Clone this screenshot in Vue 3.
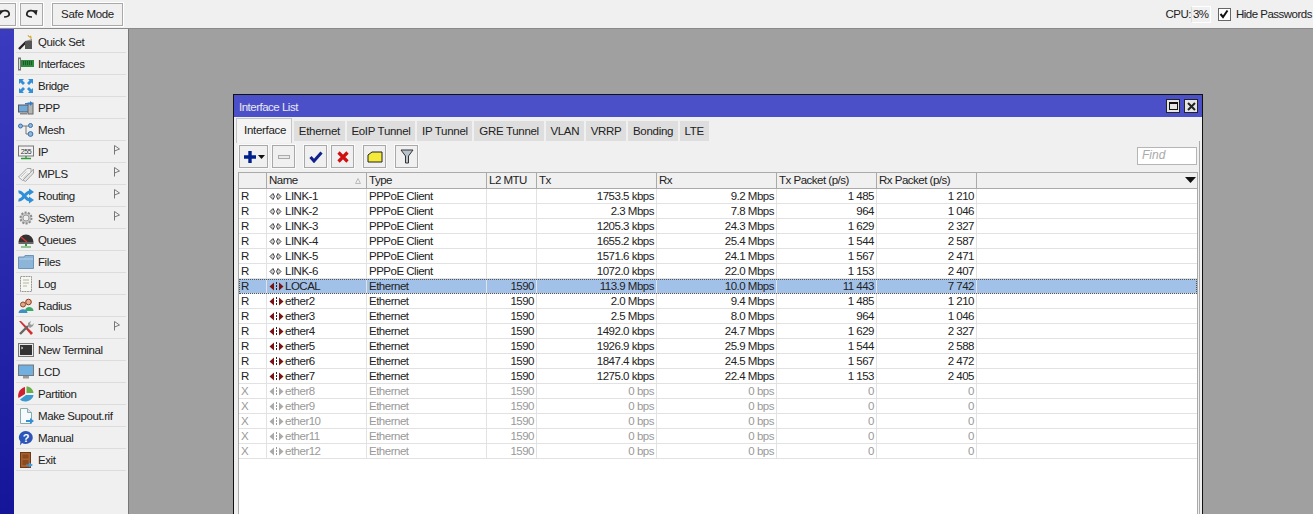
<template>
  <div class="page">
    <header class="topbar">
      <div class="tools-left">
        <button class="tbtn undo">
          <svg width="13" height="10" viewBox="0 0 13 10"><path d="M3 3 C5 1 10 1 11 4 C12 7 9 8 6 8" fill="none" stroke="#222" stroke-width="1.7"/><path d="M0.5 1 L6 1.5 L1.5 6.5 Z" fill="#222"/></svg>
        </button>
        <button class="tbtn redo">
          <svg width="13" height="10" viewBox="0 0 13 10"><path d="M10 3 C8 1 3 1 2 4 C1 7 4 8 7 8" fill="none" stroke="#222" stroke-width="1.7"/><path d="M12.5 1 L7 1.5 L11.5 6.5 Z" fill="#222"/></svg>
        </button>
        <button class="tbtn safe">Safe Mode</button>
      </div>
      <div class="tools-right">
        <span>CPU:</span><span class="cpu">3%</span>
        <span class="check">
          <svg width="10" height="10" viewBox="0 0 10 10"><path d="M1.5 5 L4 8 L8.5 1.5" fill="none" stroke="#111" stroke-width="2"/></svg>
        </span>
        <span>Hide Passwords</span>
      </div>
    </header>

    <div class="main">
      <div class="strip"></div>
      <nav class="menu">
        <div v-for="item in menu" :key="item.label" class="menu-item">
          <svg class="menu-icon" width="16" height="16" viewBox="0 0 16 16" v-html="icons[item.icon]"></svg>
          <span>{{ item.label }}</span>
          <svg v-if="item.sub" class="menu-arrow" width="6" height="10" viewBox="0 0 6 10"><path d="M0.5 0.5 L5.5 4 L0.5 6 Z M0.5 6 V9.5" fill="#f4f4f4" stroke="#777"/></svg>
        </div>
      </nav>

      <div class="desktop">
        <section class="window">
          <div class="titlebar">
            <span class="title">Interface List</span>
            <div class="win-btns">
              <span class="win-btn"><i class="max"></i></span>
              <span class="win-btn">
                <svg width="9" height="9" viewBox="0 0 9 9"><path d="M1 1 L8 8 M8 1 L1 8" stroke="#222" stroke-width="2"/></svg>
              </span>
            </div>
          </div>

          <div class="tabs">
            <span v-for="(t, i) in tabs" :key="t" class="tab" :class="{ active: i === 0 }">{{ t }}</span>
          </div>

          <div class="panel">
            <div class="actions">
              <button class="abtn add">
                <svg width="14" height="14" viewBox="0 0 14 14"><path d="M7 1 V13 M1 7 H13" stroke="#00208c" stroke-width="3.4"/></svg>
                <svg width="7" height="4" viewBox="0 0 7 4"><path d="M0 0 H7 L3.5 4 Z" fill="#111"/></svg>
              </button>
              <button class="abtn dim">
                <svg width="12" height="6" viewBox="0 0 12 6"><rect x="0.5" y="1.5" width="11" height="3" fill="#e8e8e8" stroke="#aaa"/></svg>
              </button>
              <button class="abtn gap">
                <svg width="14" height="12" viewBox="0 0 14 12"><path d="M1.5 6 L5 10 L12.5 1.5" fill="none" stroke="#11218c" stroke-width="3"/></svg>
              </button>
              <button class="abtn">
                <svg width="12" height="12" viewBox="0 0 12 12"><path d="M1.5 1.5 L10.5 10.5 M10.5 1.5 L1.5 10.5" stroke="#d01010" stroke-width="3.2"/></svg>
              </button>
              <button class="abtn gap">
                <svg width="16" height="12" viewBox="0 0 16 12"><path d="M1 4 L5 1 H15 V11 H1 Z" fill="#f5e93a" stroke="#222"/></svg>
              </button>
              <button class="abtn gap">
                <svg width="14" height="15" viewBox="0 0 14 15"><path d="M1 1 H13 L8.5 7 V14 H5.5 V7 Z" fill="#b9c3cc" stroke="#333"/></svg>
              </button>
              <div class="find">Find</div>
            </div>

            <div class="table">
              <div class="thead">
                <div v-for="(c, i) in heads" :key="i" class="th">
                  {{ c }}
                  <svg v-if="i === 1" class="sort" width="6" height="6" viewBox="0 0 6 6"><path d="M3 0.5 L5.5 5.5 H0.5 Z" fill="none" stroke="#bbb"/></svg>
                  <svg v-if="i === 8" class="drop" width="11" height="6" viewBox="0 0 11 6"><path d="M0 0 H11 L5.5 6 Z" fill="#111"/></svg>
                </div>
              </div>
              <div v-for="row in rows" :key="row.name" class="tr" :class="{ sel: row.name === 'LOCAL', off: row.flag === 'X' }">
                <div class="td">{{ row.flag }}</div>
                <div class="td name">
                  <svg class="port" width="15" height="9" viewBox="0 0 15 9">
                    <template v-if="row.type === 'Ethernet'">
                      <path d="M0.5 4.5 L5 0.5 V8.5 Z M14.5 4.5 L10 0.5 V8.5 Z" :fill="row.flag === 'X' ? '#aaa' : '#7a1414'"/>
                      <path d="M7.5 0 V9" :stroke="row.flag === 'X' ? '#999' : '#222'" stroke-dasharray="2 1"/>
                    </template>
                    <template v-else>
                      <path d="M1 4.5 L4 1.5 L5.5 4.5 L4 7.5 Z M12 4.5 L9 1.5 L7.5 4.5 L9 7.5 Z" fill="#ccc" stroke="#444"/>
                    </template>
                  </svg>{{ row.name }}
                </div>
                <div class="td">{{ row.type }}</div>
                <div class="td num">{{ row.mtu }}</div>
                <div class="td num">{{ row.tx }}</div>
                <div class="td num">{{ row.rx }}</div>
                <div class="td num">{{ row.txp }}</div>
                <div class="td num">{{ row.rxp }}</div>
                <div class="td last"></div>
              </div>
            </div>
          </div>
        </section>
      </div>
    </div>
  </div>
</template>

<script setup>
const menu = [
  { label: 'Quick Set', icon: 'quick' },
  { label: 'Interfaces', icon: 'iface' },
  { label: 'Bridge', icon: 'bridge' },
  { label: 'PPP', icon: 'ppp' },
  { label: 'Mesh', icon: 'mesh' },
  { label: 'IP', icon: 'ip', sub: true },
  { label: 'MPLS', icon: 'mpls', sub: true },
  { label: 'Routing', icon: 'routing', sub: true },
  { label: 'System', icon: 'system', sub: true },
  { label: 'Queues', icon: 'queues' },
  { label: 'Files', icon: 'files' },
  { label: 'Log', icon: 'log' },
  { label: 'Radius', icon: 'radius' },
  { label: 'Tools', icon: 'tools', sub: true },
  { label: 'New Terminal', icon: 'terminal' },
  { label: 'LCD', icon: 'lcd' },
  { label: 'Partition', icon: 'partition' },
  { label: 'Make Supout.rif', icon: 'supout' },
  { label: 'Manual', icon: 'manual' },
  { label: 'Exit', icon: 'exit' },
]

const icons = {
  quick: '<path d="M1 15 L8 8" stroke="#222" stroke-width="2.4"/><rect x="7" y="7" width="7" height="8" fill="#555"/><path d="M7 7 L14 5 V7 Z" fill="#888"/><path d="M10 1 L11 3 L13 2 L12 4 L14 4" stroke="#d9a520" fill="none"/>',
  iface: '<rect x="0.5" y="2" width="2" height="12" fill="#ddd" stroke="#777"/><rect x="3" y="4" width="13" height="7" fill="#2f8a3a"/><path d="M5 6 H14 M5 8 H14" stroke="#123" stroke-dasharray="1 1"/>',
  bridge: '<path d="M1 1 H6 L4.5 2.5 L7 5 L5 7 L2.5 4.5 L1 6 Z M15 1 V6 L13.5 4.5 L11 7 L9 5 L11.5 2.5 L10 1 Z M1 15 V10 L2.5 11.5 L5 9 L7 11 L4.5 13.5 L6 15 Z M15 15 H10 L11.5 13.5 L9 11 L11 9 L13.5 11.5 L15 10 Z" fill="#2f8fd8"/>',
  ppp: '<rect x="0.5" y="5" width="11" height="7" fill="#6fa9d8" stroke="#556"/><rect x="10" y="3" width="5" height="11" fill="#b5b5b5" stroke="#666"/><path d="M7 3 H12 V1 L15 3.5 L12 6 V4.5 H7 Z" fill="#2f7fd0"/><rect x="2" y="13" width="7" height="1.5" fill="#888"/>',
  mesh: '<circle cx="2.5" cy="4" r="2" fill="#8db9e0" stroke="#3a6fa5"/><circle cx="12.5" cy="3.5" r="2" fill="#8db9e0" stroke="#3a6fa5"/><circle cx="12.5" cy="12" r="2.4" fill="#8db9e0" stroke="#3a6fa5"/><path d="M4.5 4 H10.5 M8 4 V12 H10" stroke="#777" fill="none"/>',
  ip: '<rect x="0.5" y="2" width="15" height="10" fill="#f2f2f2" stroke="#777"/><text x="8" y="9.5" font-size="7" font-family="Liberation Sans" text-anchor="middle" fill="#333">255</text><path d="M8 12 V14 M3 14.5 H13" stroke="#2f9a3a" stroke-width="1.4"/>',
  mpls: '<path d="M0.5 11 L9 2.5 H13 V6 L4.5 14.5 Z" fill="#f2f2f2" stroke="#a5a5a5"/><path d="M5 14 L13 6 L15.5 3 V7 L7.5 15.5 Z" fill="#e4e4e4" stroke="#a5a5a5"/><path d="M3 11 L8.5 5.5 M5 12.5 L10.5 7" stroke="#c4c4c4"/>',
  routing: '<path d="M0.5 4 C5 3 7 12 12 12" fill="none" stroke="#2f8fd8" stroke-width="3"/><path d="M0.5 12 C5 13 7 4 12 4" fill="none" stroke="#2f8fd8" stroke-width="3"/><path d="M11 0.5 L16 4 L11 7.5 Z M11 8.5 L16 12 L11 15.5 Z" fill="#2f8fd8"/>',
  system: '<circle cx="8" cy="8" r="5.5" fill="#c9c9c9" stroke="#8a8a8a" stroke-width="2" stroke-dasharray="2 1.4"/><circle cx="8" cy="8" r="3" fill="#eee" stroke="#999"/>',
  queues: '<path d="M0.5 10 A7.5 7.5 0 0 1 15.5 10 Z" fill="#333"/><path d="M3 5 L9 10" stroke="#e03030" stroke-width="1.4"/><rect x="0.5" y="10" width="15" height="2" fill="#666"/><path d="M8 12 V14" stroke="#2f9a3a" stroke-width="2"/><path d="M3 15 H13" stroke="#2f9a3a"/>',
  files: '<path d="M0.5 3 H6 L7 1.5 H15.5 V14.5 H0.5 Z" fill="#8db5d8" stroke="#6a94b8"/><path d="M1 5 H15" stroke="#b8d2e8"/>',
  log: '<path d="M2.5 0.5 H13.5 V15.5 H2.5 Z" fill="#f7f7f2" stroke="#999" stroke-dasharray="2 .6"/><path d="M5 4 H11 M5 7 H11 M5 10 H9" stroke="#b5b5a5"/>',
  radius: '<circle cx="5" cy="6.5" r="2.5" fill="#e0a888" stroke="#8a4a2a"/><path d="M0.5 15 C0.5 10 9.5 10 9.5 15 Z" fill="#3f8fc8"/><circle cx="10.5" cy="4" r="2.8" fill="#e8b090" stroke="#8a3a1a"/><path d="M7 13 C7 7.5 15.5 7.5 15.5 13 Z" fill="#3aaa6a"/>',
  tools: '<path d="M1 1 L3 1 L15 13 L13 15 Z" fill="#d03030"/><path d="M2 14 L10 6" stroke="#666" stroke-width="2.4"/><path d="M10 6 L10 3 L13 1 L12 4 L14 5 L16 3 L15 6 L12 8 Z" fill="#999"/>',
  terminal: '<rect x="0.5" y="1.5" width="15" height="13" fill="#e8e8e8" stroke="#777"/><rect x="2" y="3" width="12" height="10" fill="#333"/><path d="M3 5 L5 6 L3 7" stroke="#ddd" fill="none" stroke-width=".8"/>',
  lcd: '<rect x="0.5" y="1" width="15" height="10.5" fill="#6fb0e0" stroke="#777"/><rect x="5" y="12" width="6" height="2.5" fill="#999"/>',
  partition: '<path d="M7 1 V8 L0.5 12 C-1 8 2 2 7 1 Z" fill="#d02030"/><path d="M8.5 0.5 C12 0.5 15 3 15.5 7 H8.5 Z" fill="#6ab04a"/><path d="M2 13.5 L8 9 H15.5 C15 13 11 15.5 7 15.5 C5 15.5 3 14.5 2 13.5 Z" fill="#3a9ad0"/>',
  supout: '<path d="M2.5 0.5 H9.5 L13.5 4.5 V15.5 H2.5 Z" fill="#f6fafd" stroke="#8aa"/><path d="M9.5 0.5 V4.5 H13.5" fill="#dde" stroke="#8aa"/><path d="M8 12 H12 V10 L16 13 L12 16 V14 H8 Z" fill="#2f8fd8"/>',
  manual: '<path d="M8 1 A7 6.5 0 1 1 4 13 L2 15.5 L2.4 11.5 A7 6.5 0 0 1 8 1 Z" fill="#2b55b8"/><text x="8" y="12" font-size="11" font-weight="700" font-family="Liberation Sans" text-anchor="middle" fill="#fff">?</text>',
  exit: '<rect x="2.5" y="0.5" width="10" height="15" fill="#a8602c" stroke="#6a3a18"/><rect x="4.5" y="2.5" width="6" height="4" fill="#8a4a20"/><rect x="4.5" y="8" width="6" height="5" fill="#8a4a20"/><path d="M8 12.5 H11 V10.5 L15 13 L11 15.5 V13.5 H8 Z" fill="#3f9ae0"/>',
}

const tabs = ['Interface', 'Ethernet', 'EoIP Tunnel', 'IP Tunnel', 'GRE Tunnel', 'VLAN', 'VRRP', 'Bonding', 'LTE']

const heads = ['', 'Name', 'Type', 'L2 MTU', 'Tx', 'Rx', 'Tx Packet (p/s)', 'Rx Packet (p/s)', '']

const pp = 'PPPoE Client'
const et = 'Ethernet'
const rows = [
  ['R', 'LINK-1', pp, '', '1753.5 kbps', '9.2 Mbps', '1 485', '1 210'],
  ['R', 'LINK-2', pp, '', '2.3 Mbps', '7.8 Mbps', '964', '1 046'],
  ['R', 'LINK-3', pp, '', '1205.3 kbps', '24.3 Mbps', '1 629', '2 327'],
  ['R', 'LINK-4', pp, '', '1655.2 kbps', '25.4 Mbps', '1 544', '2 587'],
  ['R', 'LINK-5', pp, '', '1571.6 kbps', '24.1 Mbps', '1 567', '2 471'],
  ['R', 'LINK-6', pp, '', '1072.0 kbps', '22.0 Mbps', '1 153', '2 407'],
  ['R', 'LOCAL', et, '1590', '113.9 Mbps', '10.0 Mbps', '11 443', '7 742'],
  ['R', 'ether2', et, '1590', '2.0 Mbps', '9.4 Mbps', '1 485', '1 210'],
  ['R', 'ether3', et, '1590', '2.5 Mbps', '8.0 Mbps', '964', '1 046'],
  ['R', 'ether4', et, '1590', '1492.0 kbps', '24.7 Mbps', '1 629', '2 327'],
  ['R', 'ether5', et, '1590', '1926.9 kbps', '25.9 Mbps', '1 544', '2 588'],
  ['R', 'ether6', et, '1590', '1847.4 kbps', '24.5 Mbps', '1 567', '2 472'],
  ['R', 'ether7', et, '1590', '1275.0 kbps', '22.4 Mbps', '1 153', '2 405'],
  ['X', 'ether8', et, '1590', '0 bps', '0 bps', '0', '0'],
  ['X', 'ether9', et, '1590', '0 bps', '0 bps', '0', '0'],
  ['X', 'ether10', et, '1590', '0 bps', '0 bps', '0', '0'],
  ['X', 'ether11', et, '1590', '0 bps', '0 bps', '0', '0'],
  ['X', 'ether12', et, '1590', '0 bps', '0 bps', '0', '0'],
].map(([flag, name, type, mtu, tx, rx, txp, rxp]) => ({ flag, name, type, mtu, tx, rx, txp, rxp }))
</script>

<style>
html, body {
  margin: 0;
  overflow: hidden;
}
</style>

<style scoped>
.page {
  width: 1313px;
  height: 514px;
  display: flex;
  flex-direction: column;
  overflow: hidden;
  background: #f0f0f0;
  font-family: "Liberation Sans", Arial, sans-serif;
  font-size: 11.5px;
  letter-spacing: -0.5px;
  color: #222;
}
.topbar {
  height: 29px;
  flex: none;
  box-sizing: border-box;
  display: flex;
  justify-content: space-between;
  align-items: center;
  background: #f0f0f0;
  border-bottom: 1px solid #8a8a8a;
}
.tools-left {
  display: flex;
  align-items: center;
  margin-left: -7px;
}
.tbtn {
  box-sizing: border-box;
  height: 23px;
  display: flex;
  align-items: center;
  justify-content: center;
  padding: 0;
  background: #f0f0f0;
  border: 1px solid #a9a9a9;
  box-shadow: 0 0 0 1px #fff;
  font: inherit;
  letter-spacing: -0.3px;
  color: #222;
}
.undo { width: 23px; margin-right: 4px; }
.redo { width: 23px; margin-right: 9px; }
.safe { width: 71px; }
.tools-right {
  display: flex;
  align-items: center;
  white-space: nowrap;
  margin-right: 1px;
}
.cpu {
  box-sizing: border-box;
  width: 20px;
  height: 17px;
  line-height: 15px;
  margin-right: 7px;
  padding-left: 1px;
  border: 1px solid #fff;
  border-left-color: #ddd;
}
.check {
  box-sizing: border-box;
  width: 13px;
  height: 13px;
  margin-right: 5px;
  display: flex;
  align-items: center;
  justify-content: center;
  background: #fff;
  border: 1px solid #666;
}
.main {
  flex: 1;
  display: flex;
  min-height: 0;
}
.strip {
  width: 14px;
  flex: none;
  background: linear-gradient(#3b3bbf, #15159a);
}
.menu {
  width: 115px;
  flex: none;
  box-sizing: border-box;
  padding: 2px 2px 0;
  background: #f0f0f0;
  border-right: 1px solid #777;
  letter-spacing: -0.4px;
}
.menu-item {
  position: relative;
  box-sizing: border-box;
  height: 22px;
  display: flex;
  align-items: center;
  gap: 4px;
  padding-left: 2px;
  border-bottom: 1px solid #dcdcdc;
  white-space: nowrap;
}
.menu-icon {
  flex: none;
}
.menu-arrow {
  position: absolute;
  right: 6px;
  top: 4px;
}
.desktop {
  flex: 1;
  position: relative;
  background: #a0a0a0;
}
.window {
  position: absolute;
  left: 104px;
  top: 65px;
  width: 970px;
  height: 460px;
  box-sizing: border-box;
  background: #f0f0f0;
  border: 1px solid #111;
  border-bottom: none;
}
.titlebar {
  height: 22px;
  display: flex;
  align-items: center;
  justify-content: space-between;
  padding: 0 4px 0 5px;
  background: #4c50c8;
  color: #e8e8f0;
}
.title {
  padding-top: 2px;
}
.win-btns {
  display: flex;
  gap: 4px;
}
.win-btn {
  box-sizing: border-box;
  width: 14px;
  height: 14px;
  display: flex;
  align-items: center;
  justify-content: center;
  background: #e4e4e4;
  border: 1px solid #222;
}
.max {
  width: 9px;
  height: 8px;
  border: 1px solid #111;
  border-top-width: 2px;
  box-sizing: border-box;
}
.tabs {
  display: flex;
  height: 24px;
  align-items: flex-end;
  padding-left: 2px;
  gap: 2px;
  letter-spacing: -0.3px;
}
.tab {
  height: 20px;
  line-height: 20px;
  padding: 0 4.75px;
  background: #dedede;
  box-sizing: border-box;
  white-space: nowrap;
}
.tab.active {
  height: 25px;
  line-height: 22px;
  margin-bottom: -2px;
  padding: 0 5px 0 7px;
  background: #f4f4f4;
  border: 1px solid #c4c4c4;
  border-bottom: none;
  position: relative;
}
.panel {
  margin-left: 4px;
  margin-right: 2px;
  height: 400px;
  border-right: 1px solid #aaa;
}
.actions {
  position: relative;
  display: flex;
  align-items: center;
  height: 31px;
  padding-left: 1px;
  gap: 4px;
}
.abtn {
  box-sizing: border-box;
  width: 23px;
  height: 23px;
  padding: 0;
  display: flex;
  align-items: center;
  justify-content: center;
  gap: 1px;
  background: #f0f0f0;
  border: 1px solid #a9a9a9;
  box-shadow: 0 0 0 1px #fafafa;
}
.abtn.add { width: 29px; }
.abtn.gap { margin-left: 5px; }
.find {
  position: absolute;
  right: 2px;
  top: 6px;
  box-sizing: border-box;
  width: 60px;
  height: 18px;
  line-height: 15px;
  padding-left: 4px;
  background: #fff;
  border: 1px solid #b5b5b5;
  color: #aaa;
  font-size: 12px;
  font-style: italic;
  letter-spacing: 0;
}
.table {
  box-sizing: border-box;
  width: 960px;
  height: 360px;
  background: #fff;
  border-left: 1px solid #aaa;
  border-right: 1px solid #aaa;
  border-top: 1px solid #aaa;
}
.thead, .tr {
  display: grid;
  grid-template-columns: 28px 100px 120px 50px 120px 120px 100px 100px 1fr;
}
.thead {
  box-sizing: border-box;
  height: 16px;
  background: #f0f0f0;
  border-bottom: 1px solid #aaa;
}
.th {
  position: relative;
  box-sizing: border-box;
  line-height: 15px;
  padding-left: 2px;
  border-right: 1px solid #aaa;
  white-space: nowrap;
}
.th:last-child {
  border-right: none;
}
.sort {
  position: absolute;
  right: 5px;
  top: 5px;
}
.drop {
  position: absolute;
  right: 1px;
  top: 4px;
}
.tr {
  height: 15px;
  box-sizing: border-box;
  border-bottom: 1px solid #e2e2e2;
}
.td {
  box-sizing: border-box;
  line-height: 14px;
  padding: 0 2px;
  border-right: 1px solid #e2e2e2;
  white-space: nowrap;
  overflow: hidden;
}
.td.name {
  display: flex;
  align-items: center;
  padding-left: 2px;
}
.port {
  flex: none;
  margin-right: 1px;
}
.num {
  text-align: right;
}
.td.last {
  border-right: none;
}
.tr.sel {
  background: #a2c1e8;
  outline: 1px dotted #555;
  outline-offset: -1px;
}
.tr.off {
  color: #999;
}
</style>
